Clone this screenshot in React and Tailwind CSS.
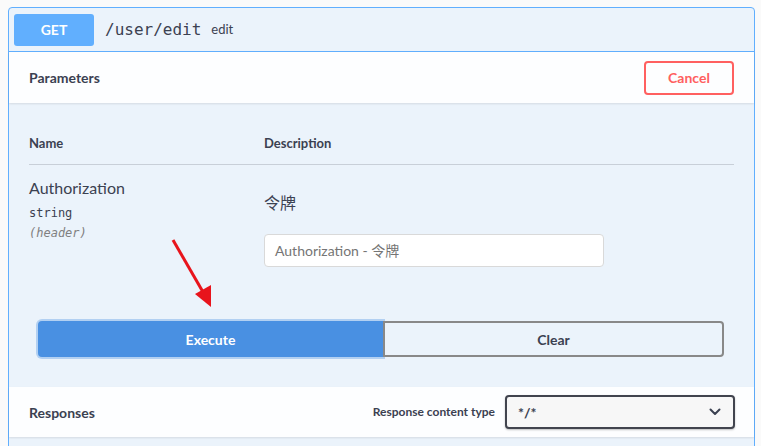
import React from "react";

export default function App() {
  return (
    <div className="relative w-[761px] h-[446px] overflow-hidden bg-[#fafafa] pt-[7px] pl-[8px] text-[#3b4151]" style={{ fontFamily: "Lato, 'Noto Sans CJK SC', sans-serif" }}>
      <div className="w-[747px] h-[460px] border border-[#61affe] rounded-[4px] bg-[#ebf3fb]">
        {/* summary */}
        <div className="flex items-center h-[44px] px-[5px] border-b border-[#61affe]">
          <div className="w-[80px] h-[32px] rounded-[3px] bg-[#61affe] flex items-center justify-center text-white font-bold text-[14px]">GET</div>
          <span className="ml-[11px] text-[16px] text-[#3b4151]" style={{ fontFamily: "'DejaVu Sans Mono', monospace" }}>/user/edit</span>
          <span className="ml-[10px] text-[13px] text-[#3b4151]">edit</span>
        </div>
        {/* parameters header */}
        <div className="flex items-center justify-between h-[51px] pl-[20px] pr-[20px] bg-white/90 shadow-[0_1px_2px_rgba(0,0,0,0.1)]">
          <span className="font-bold text-[14px]">Parameters</span>
          <button className="w-[90px] h-[34px] border-2 border-[#ff6060] rounded-[4px] text-[#ff6060] font-bold text-[14px] bg-transparent">Cancel</button>
        </div>
        {/* table */}
        <div className="px-[20px] pt-[21px]">
          <div className="flex items-center h-[41px] border-b border-[#3b4151]/20 text-[13px] font-bold">
            <div className="w-[235px]">Name</div>
            <div>Description</div>
          </div>
          <div className="flex pt-[12px]">
            <div className="w-[235px] flex flex-col">
              <span className="text-[16px] leading-[22px] font-normal">Authorization</span>
              <span className="text-[12px] mt-[5px] leading-[18px]" style={{ fontFamily: "'DejaVu Sans Mono', monospace" }}>string</span>
              <span className="text-[12px] italic text-[#808080] mt-[2px] leading-[18px]" style={{ fontFamily: "'DejaVu Sans Mono', monospace" }}>(header)</span>
            </div>
            <div className="flex flex-col">
              <span className="text-[16px] leading-[22px] mt-[15px]">令牌</span>
              <div className="mt-[20px] w-[340px] h-[33px] bg-white border border-[#d9d9d9] rounded-[4px] flex items-center px-[10px] text-[14px] text-[#757575]">Authorization - 令牌</div>
            </div>
          </div>
        </div>
        {/* buttons */}
        <div className="flex mt-[54px] ml-[29px] w-[686px] h-[36px]">
          <button className="w-[345px] h-full bg-[#4990e2] border-2 border-[#4990e2] rounded-l-[4px] text-white font-bold text-[14px] shadow-[0_0_0_2px_rgba(73,144,226,0.35)]">Execute</button>
          <button className="flex-1 h-full border-2 border-[#888888] rounded-r-[4px] font-bold text-[14px] text-[#3b4151] bg-transparent">Clear</button>
        </div>
        {/* responses */}
        <div className="mt-[30px] flex items-center justify-between h-[50px] pl-[20px] pr-[19px] bg-white/90 shadow-[0_1px_2px_rgba(0,0,0,0.1)]">
          <span className="font-bold text-[14px]">Responses</span>
          <div className="flex items-center">
            <span className="font-bold text-[12px] mr-[10px]">Response content type</span>
            <div className="w-[230px] h-[34px] border-2 border-[#41444e] rounded-[4px] bg-[#f7f7f7] flex items-center justify-between pl-[11px] pr-[12px] shadow-[0_1px_2px_rgba(0,0,0,0.25)]">
              <span className="font-bold text-[14px]">*/*</span>
              <svg width="12" height="8" viewBox="0 0 12 8" fill="none"><path d="M1.5 1.5 L6 6 L10.5 1.5" stroke="#3b4151" strokeWidth="2" strokeLinecap="round" strokeLinejoin="round" /></svg>
            </div>
          </div>
        </div>
      </div>
      {/* annotation arrow */}
      <svg className="absolute left-0 top-0 pointer-events-none" width="761" height="446">
        <line x1="173" y1="240" x2="203" y2="292" stroke="#e8141c" strokeWidth="3" />
        <polygon points="211,307 195,294 211,285" fill="#e8141c" />
      </svg>
    </div>
  );
}
